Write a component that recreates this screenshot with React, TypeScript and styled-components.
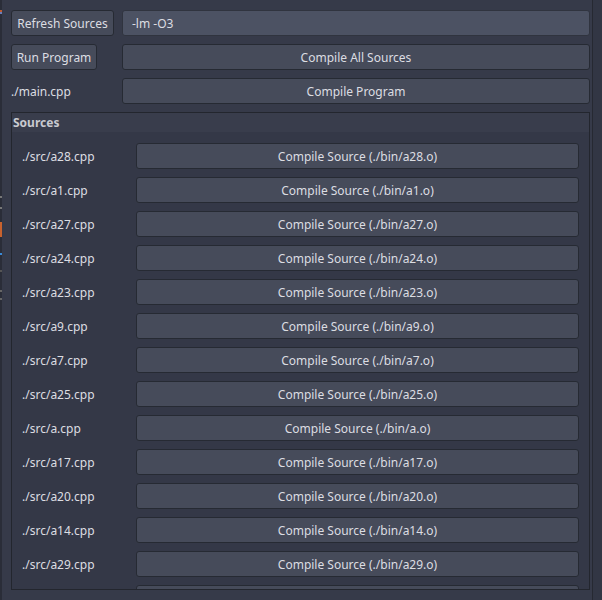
import React from "react";
import styled, { createGlobalStyle } from "styled-components";

const Global = createGlobalStyle`
  html, body { margin: 0; padding: 0; background: #323644; }
  body { font-family: "Noto Sans", "Open Sans", sans-serif; font-size: 12px; color: #dcdde2; }
`;

const Screen = styled.div`
  width: 602px;
  height: 600px;
  display: flex;
  overflow: hidden;
  background: #323644;
`;

const EdgeStrip = styled.div`
  width: 2px;
  flex: none;
  background: linear-gradient(
    to bottom,
    #2a2d38 0px, #2a2d38 10px, #c05a30 10px, #c05a30 12px, #6a7dbb 12px, #6a7dbb 14px,
    #2a2d38 14px, #2a2d38 196px, #777 196px, #777 198px, #2a2d38 198px, #2a2d38 207px,
    #777 207px, #777 209px, #2a2d38 209px, #2a2d38 222px, #c8622e 222px, #c8622e 237px,
    #2a2d38 237px, #2a2d38 253px, #3a8ad8 253px, #3a8ad8 255px, #2a2d38 255px, #2a2d38 270px,
    #555 270px, #555 272px, #2a2d38 272px, #2a2d38 290px, #666 290px, #666 292px,
    #2a2d38 292px, #2a2d38 298px, #666 298px, #666 300px, #2a2d38 300px
  );
`;

const Window = styled.div`
  width: 591px;
  flex: none;
  box-sizing: border-box;
  border-right: 1px solid #262932;
  background: #363a49;
  padding: 10px 2px 0 9px;
  display: flex;
  flex-direction: column;
  gap: 8px;
`;

const Row = styled.div`
  display: grid;
  grid-template-columns: 103px 1fr;
  column-gap: 8px;
  align-items: center;
  height: 26px;
`;

const Button = styled.button<{ $fit?: boolean }>`
  height: 26px;
  box-sizing: border-box;
  border: 1px solid #262a33;
  border-radius: 3px;
  background: #464b5a;
  color: #dcdde2;
  font-family: "Noto Sans", "Open Sans", sans-serif;
  font-size: 12px;
  padding: 0 4px;
  justify-self: ${(p) => (p.$fit ? "start" : "stretch")};
  width: ${(p) => (p.$fit ? "86px" : "auto")};
  white-space: nowrap;
`;

const Input = styled.div`
  height: 26px;
  box-sizing: border-box;
  border: 1px solid #30343f;
  border-radius: 3px;
  background: #4c5263;
  color: #dcdde2;
  display: flex;
  align-items: center;
  padding-left: 9px;
`;

const Label = styled.span`
  white-space: nowrap;
`;

const Child = styled.div`
  height: 478px;
  box-sizing: border-box;
  border: 1px solid #23262e;
  background: #343847;
  overflow: hidden;
  display: flex;
  flex-direction: column;
  flex: none;
`;

const ChildHeader = styled.div`
  height: 19px;
  padding-left: 1px;
  font-weight: 700;
  color: #c9cad0;
  background: #393d4c;
  display: flex;
  align-items: center;
  flex: none;
`;

const SourceList = styled.div`
  padding: 11px 10px 0 10px;
  display: flex;
  flex-direction: column;
  gap: 8px;
`;

const SourceRow = styled.div`
  display: grid;
  grid-template-columns: 114px 1fr;
  align-items: center;
  height: 26px;
  flex: none;
`;

const sources = ["a28", "a1", "a27", "a24", "a23", "a9", "a7", "a25", "a", "a17", "a20", "a14", "a29"];

export default function App() {
  return (
    <>
      <Global />
      <Screen>
        <EdgeStrip />
        <Window>
          <Row>
            <Button>Refresh Sources</Button>
            <Input>-lm -O3</Input>
          </Row>
          <Row>
            <Button $fit>Run Program</Button>
            <Button>Compile All Sources</Button>
          </Row>
          <Row>
            <Label>./main.cpp</Label>
            <Button>Compile Program</Button>
          </Row>
          <Child>
            <ChildHeader>Sources</ChildHeader>
            <SourceList>
              {sources.map((s) => (
                <SourceRow key={s}>
                  <Label>./src/{s}.cpp</Label>
                  <Button>Compile Source (./bin/{s}.o)</Button>
                </SourceRow>
              ))}
              <SourceRow aria-hidden>
                <span />
                <Button tabIndex={-1} />
              </SourceRow>
            </SourceList>
          </Child>
        </Window>
      </Screen>
    </>
  );
}
